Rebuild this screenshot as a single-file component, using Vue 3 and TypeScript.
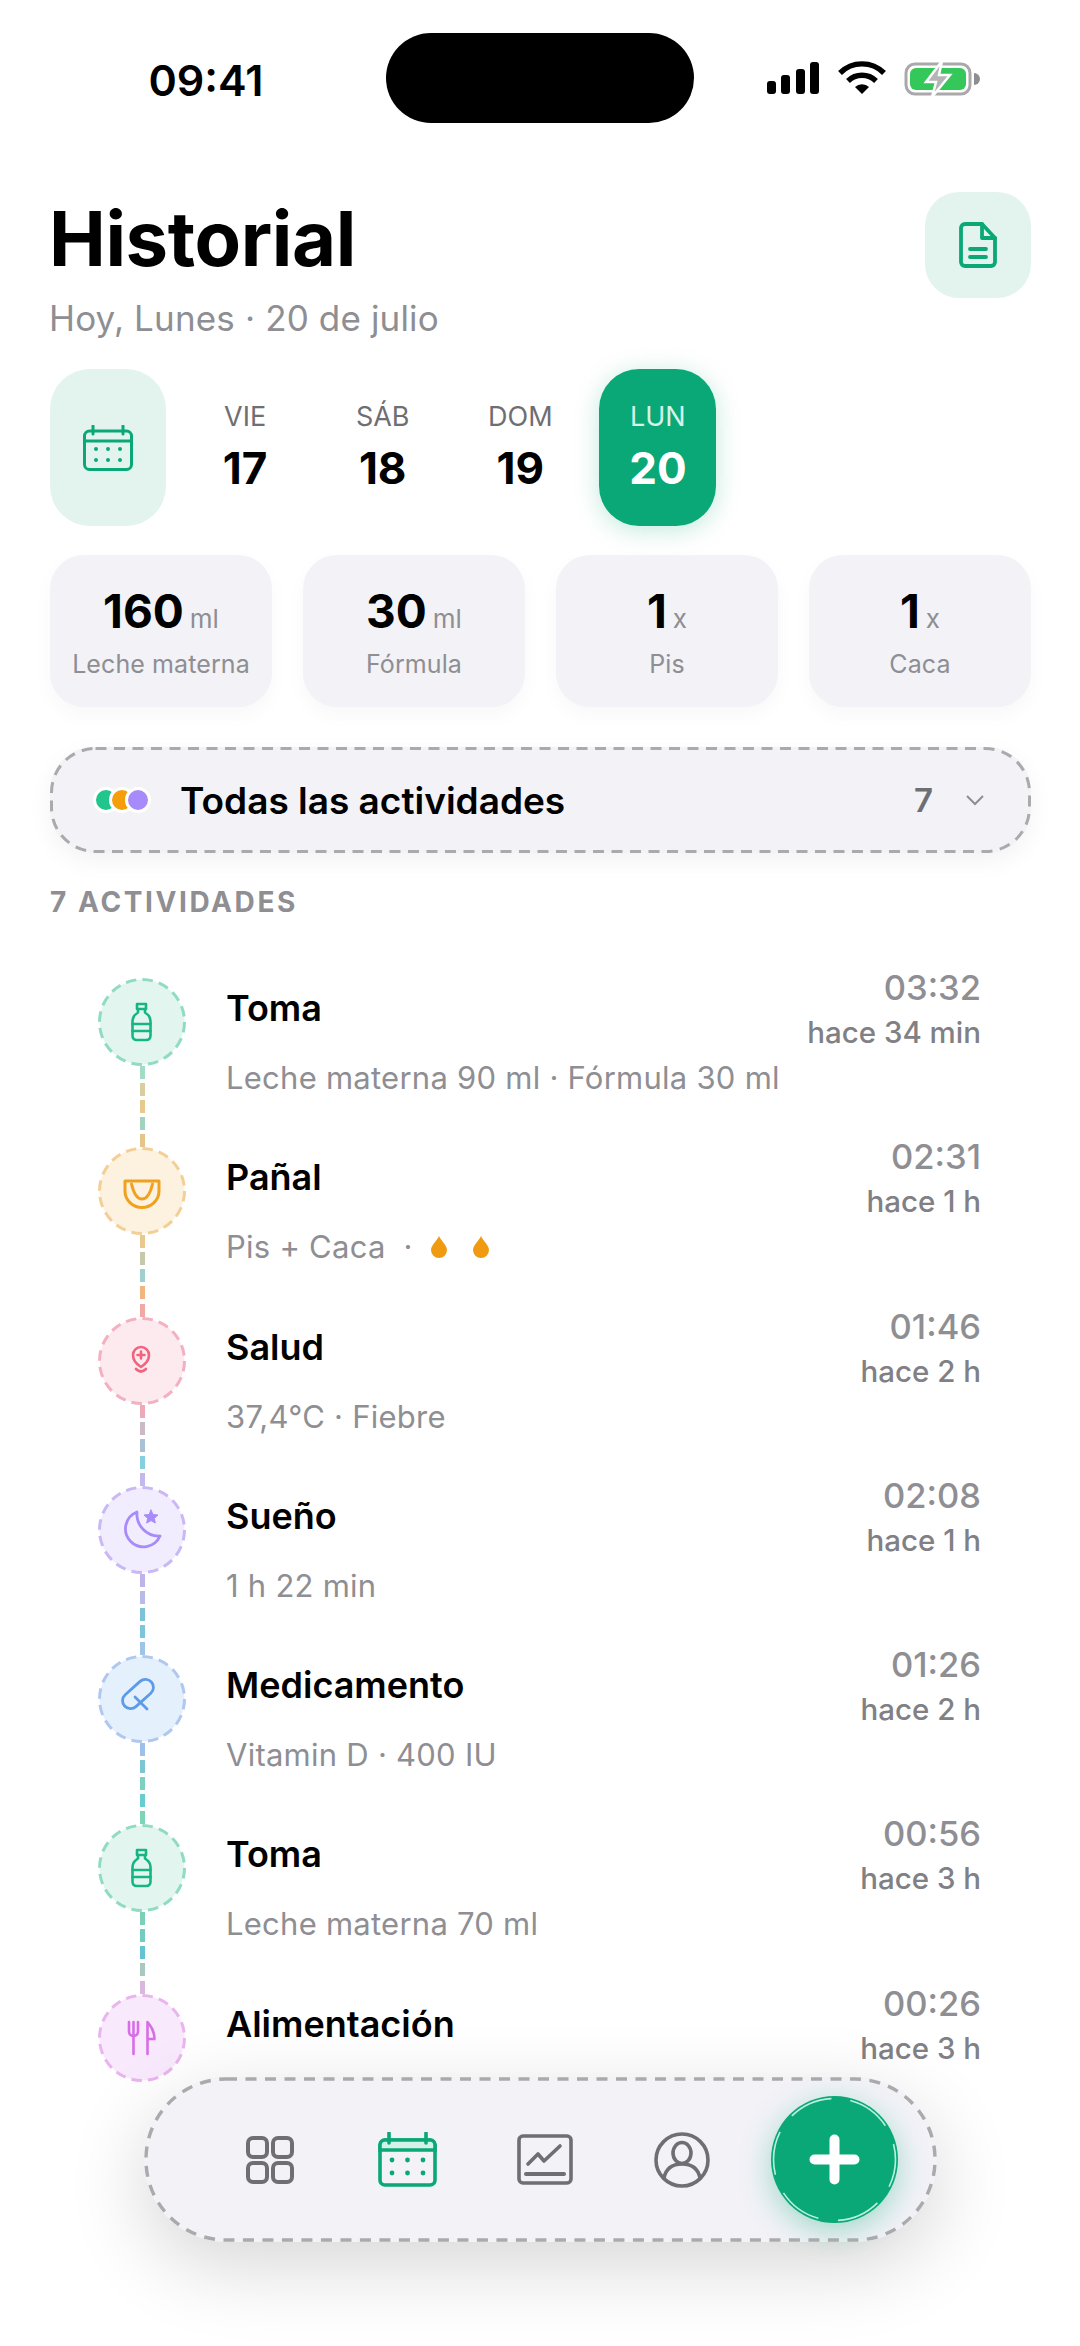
<script setup lang="ts">
type Row = {
  id: number
  kind: string
  title: string
  sub: string
  time: string
  ago: string
  fill: string
  ring: string
  ink: string
  drops?: boolean
  dashes: string[]
}

const days = [
  { label: 'VIE', num: 17, active: false },
  { label: 'SÁB', num: 18, active: false },
  { label: 'DOM', num: 19, active: false },
  { label: 'LUN', num: 20, active: true }
]

const stats = [
  { value: '160', unit: 'ml', label: 'Leche materna' },
  { value: '30', unit: 'ml', label: 'Fórmula' },
  { value: '1', unit: 'x', label: 'Pis' },
  { value: '1', unit: 'x', label: 'Caca' }
]

const rows: Row[] = [
  { id: 1, kind: 'bottle', title: 'Toma', sub: 'Leche materna 90 ml · Fórmula 30 ml', time: '03:32', ago: 'hace 34 min',
    fill: '#e2f6ef', ring: '#8fdcc0', ink: '#17b584',
    dashes: ['#a3dcc4', '#d9cf9e', '#e6c98e', '#a0d4c0', '#e5c68a'] },
  { id: 2, kind: 'diaper', title: 'Pañal', sub: 'Pis + Caca  ·', time: '02:31', ago: 'hace 1 h',
    fill: '#fdf1e0', ring: '#f3cf95', ink: '#f0a21e', drops: true,
    dashes: ['#e8c88e', '#c7c9a8', '#9fd0cf', '#f0b67e', '#f2a9a6'] },
  { id: 3, kind: 'health', title: 'Salud', sub: '37,4°C · Fiebre', time: '01:46', ago: 'hace 2 h',
    fill: '#fdeaee', ring: '#f3b0c0', ink: '#f0647f',
    dashes: ['#ecaab8', '#cdb9c6', '#a8c2d4', '#86cfe0', '#c5b8ec'] },
  { id: 4, kind: 'sleep', title: 'Sueño', sub: '1 h 22 min', time: '02:08', ago: 'hace 1 h',
    fill: '#f1ecfe', ring: '#c9b8f5', ink: '#a78bfa',
    dashes: ['#c0b3ec', '#b8bbe8', '#7cc3d8', '#7cc6dc', '#a0c4e8'] },
  { id: 5, kind: 'pill', title: 'Medicamento', sub: 'Vitamin D · 400 IU', time: '01:26', ago: 'hace 2 h',
    fill: '#e5f0fd', ring: '#b0c8f0', ink: '#5b9be8',
    dashes: ['#9cc0ea', '#7cc6d4', '#7ed0c0', '#68cdd0', '#7dd4b8'] },
  { id: 6, kind: 'bottle', title: 'Toma', sub: 'Leche materna 70 ml', time: '00:56', ago: 'hace 3 h',
    fill: '#e2f6ef', ring: '#8fdcc0', ink: '#17b584',
    dashes: ['#7dd0b8', '#74ccc0', '#64c4d4', '#a8c8c0', '#d8b8dc'] },
  { id: 7, kind: 'food', title: 'Alimentación', sub: '', time: '00:26', ago: 'hace 3 h',
    fill: '#f9e9fc', ring: '#e9b5ef', ink: '#d86de8',
    dashes: [] }
]
</script>

<template>
  <div class="screen">
    <div class="status">
      <div class="clock">09:41</div>
      <div class="island"></div>
      <div class="status-icons">
        <svg width="54" height="34" viewBox="0 0 54 34">
          <rect x="1" y="20" width="9" height="13" rx="3" fill="#000" />
          <rect x="15" y="14" width="9" height="19" rx="3" fill="#000" />
          <rect x="30" y="8" width="9" height="25" rx="3" fill="#000" />
          <rect x="44" y="1" width="9" height="32" rx="3" fill="#000" />
        </svg>
        <svg width="48" height="34" viewBox="0 0 48 34" fill="none" stroke="#000" stroke-width="5.4">
          <path d="M2 12 A31 31 0 0 1 46 12" />
          <path d="M10 20 A20 20 0 0 1 38 20" />
          <path d="M17 26 L24 33 L31 26 A10 10 0 0 0 17 26 Z" fill="#000" stroke="none" />
        </svg>
        <svg width="76" height="36" viewBox="0 0 76 36" fill="none">
          <rect x="2" y="3" width="64" height="30" rx="9" stroke="#a9a9ab" stroke-width="3" />
          <path d="M70 12 A6 6 0 0 1 70 24 Z" fill="#8e8e90" />
          <rect x="6" y="7" width="56" height="22" rx="6" fill="#34c759" />
          <path d="M38 0 L22 21 H32 L28 36 L46 14 H35 Z" fill="#b4b4b6" stroke="#fff" stroke-width="2.5" />
        </svg>
      </div>
    </div>

    <div class="page">
      <header class="head">
        <div>
          <h1>Historial</h1>
          <p class="date">Hoy, Lunes · 20 de julio</p>
        </div>
        <button class="doc-btn">
          <svg width="38" height="46" viewBox="0 0 38 46" fill="none" stroke="#0aa876" stroke-width="3.8" stroke-linejoin="round" stroke-linecap="round">
            <path d="M6 2 H23 L36 16 V40 A4 4 0 0 1 32 44 H6 A4 4 0 0 1 2 40 V6 A4 4 0 0 1 6 2 Z" />
            <path d="M23 2 V16 H36" />
            <path d="M11 27 H27 M11 35 H27" />
          </svg>
        </button>
      </header>

      <div class="days">
        <div class="cal-tile">
          <svg width="50" height="46" viewBox="0 0 50 46" fill="none" stroke="#0aa876" stroke-width="3">
            <rect x="1.5" y="6" width="47" height="38.5" rx="5" />
            <path d="M1.5 16 H48.5" />
            <path d="M10 1 V9 M40 1 V9" stroke-linecap="round" />
            <g fill="#0aa876" stroke="none">
              <circle cx="13" cy="24" r="2" /><circle cx="25" cy="24" r="2" /><circle cx="37" cy="24" r="2" />
              <circle cx="13" cy="35" r="2" /><circle cx="25" cy="35" r="2" /><circle cx="37" cy="35" r="2" />
            </g>
          </svg>
        </div>
        <div v-for="d in days" :key="d.num" class="day" :class="{ active: d.active }">
          <span class="day-label">{{ d.label }}</span>
          <span class="day-num">{{ d.num }}</span>
        </div>
      </div>

      <div class="stats">
        <div v-for="s in stats" :key="s.label" class="stat">
          <div class="stat-value">{{ s.value }}<small>{{ s.unit }}</small></div>
          <div class="stat-label">{{ s.label }}</div>
        </div>
      </div>

      <div class="filter">
        <svg class="outline" width="981" height="106" viewBox="0 0 981 106" fill="none">
          <rect x="1.5" y="1.5" width="978" height="103" rx="44" stroke="#aaaaac" stroke-width="3" stroke-dasharray="11 7.5" />
        </svg>
        <div class="dots"><i class="g"></i><i class="o"></i><i class="p"></i></div>
        <span class="filter-text">Todas las actividades</span>
        <span class="filter-count">7</span>
        <svg width="20" height="12" viewBox="0 0 20 12" fill="none" stroke="#8e8e93" stroke-width="2">
          <path d="M2 2 L10 10 L18 2" />
        </svg>
      </div>

      <div class="section">7 ACTIVIDADES</div>

      <div class="timeline">
        <div v-for="r in rows" :key="r.id" class="row">
          <div class="rail">
            <svg class="node" width="88" height="88" viewBox="-44 -44 88 88" fill="none">
              <circle r="42.5" :fill="r.fill" :stroke="r.ring" stroke-width="3" stroke-dasharray="10.5 6.2" />
              <g :stroke="r.ink" stroke-width="2.6" stroke-linecap="round" stroke-linejoin="round">
                <template v-if="r.kind === 'bottle'">
                  <path d="M-5 -18 H4 V-13 H-5 Z" />
                  <path d="M-4 -13 V-9.5 Q-9.5 -6 -9.5 -1 V13.5 Q-9.5 18 -5 18 H4 Q8.5 18 8.5 13.5 V-1 Q8.5 -6 3 -9.5 V-13" />
                  <path d="M-9.5 2 H8.5 M-9.5 9 H8.5" />
                </template>
                <template v-else-if="r.kind === 'diaper'">
                  <path d="M-17 -10 H17 V0 A17 16.5 0 0 1 -17 0 Z" stroke-width="3" />
                  <path d="M-10.5 -7 Q-7 8 0 8 Q7 8 10.5 -7" stroke-width="3" />
                </template>
                <template v-else-if="r.kind === 'health'">
                  <path d="M-1 6 Q-9 1 -9 -6 A8 8 0 0 1 7 -6 Q7 1 -1 6 Z" />
                  <path d="M-1 -9.5 V-2.5 M-4.5 -6 H2.5" />
                  <path d="M-6 8 Q-1 13 4 8" />
                </template>
                <template v-else-if="r.kind === 'sleep'">
                  <path d="M-5 -18 A18 18 0 1 0 18 6 A22 22 0 0 1 -5 -18 Z" stroke-width="2.8" />
                  <path d="M9 -20 L11 -15.5 L16 -15 L12.3 -11.7 L13.3 -7 L9 -9.4 L4.7 -7 L5.7 -11.7 L2 -15 L7 -15.5 Z" :fill="r.ink" stroke-width="1" />
                </template>
                <template v-else-if="r.kind === 'pill'">
                  <rect x="-22" y="-13" width="36" height="16" rx="8" transform="rotate(-42 -4 -5)" stroke-width="2.8" />
                  <path d="M-7 -2 L5 10" stroke-width="2.8" />
                </template>
                <template v-else-if="r.kind === 'food'">
                  <path d="M-13 -16 V-7 Q-13 -2 -8.5 -2 Q-4 -2 -4 -7 V-16 M-8.5 -16 V16" />
                  <path d="M5.5 16 V-16 Q12.5 -8 12.5 1 H5.5" />
                </template>
              </g>
            </svg>
            <div v-if="r.dashes.length" class="link">
              <span v-for="(c, i) in r.dashes" :key="i" class="dash" :style="{ background: c }"></span>
            </div>
          </div>
          <div class="body">
            <div class="title">{{ r.title }}</div>
            <div v-if="r.sub" class="sub">
              <span>{{ r.sub }}</span>
              <template v-if="r.drops">
                <svg v-for="n in 2" :key="n" class="drop" width="16" height="22" viewBox="0 0 16 22">
                  <path d="M8 0 C10 5 16 9 16 14 A8 8 0 0 1 0 14 C0 9 6 5 8 0 Z" fill="#f09a12" />
                </svg>
              </template>
            </div>
          </div>
          <div class="side">
            <div class="time">{{ r.time }}</div>
            <div class="ago">{{ r.ago }}</div>
          </div>
        </div>
      </div>
    </div>

    <nav class="tabbar">
      <svg class="outline" width="793" height="165" viewBox="0 0 793 165" fill="none">
        <rect x="2" y="2" width="789" height="161" rx="80" stroke="#aaaaac" stroke-width="3.4" stroke-dasharray="11 8.5" />
      </svg>
      <div class="tab">
        <svg width="48" height="48" viewBox="0 0 48 48" fill="none" stroke="#6e6e73" stroke-width="4">
          <rect x="2" y="2" width="19" height="19" rx="5" />
          <rect x="27" y="2" width="19" height="19" rx="5" />
          <rect x="2" y="27" width="19" height="19" rx="5" />
          <rect x="27" y="27" width="19" height="19" rx="5" />
        </svg>
      </div>
      <div class="tab">
        <svg width="59" height="55" viewBox="0 0 59 55" fill="none" stroke="#0aa876" stroke-width="3.6">
          <rect x="2" y="8" width="55" height="45" rx="5" />
          <path d="M2 17 H57" />
          <path d="M2 13 A5 5 0 0 1 7 8 H52 A5 5 0 0 1 57 13 V18 H2 Z" fill="#d6f2e8" />
          <path d="M11 1 V11 M48 1 V11" stroke-linecap="round" />
          <g fill="#0aa876" stroke="none">
            <circle cx="14" cy="28" r="2.4" /><circle cx="29.5" cy="28" r="2.4" /><circle cx="45" cy="28" r="2.4" />
            <circle cx="14" cy="41" r="2.4" /><circle cx="29.5" cy="41" r="2.4" /><circle cx="45" cy="41" r="2.4" />
          </g>
        </svg>
      </div>
      <div class="tab">
        <svg width="56" height="51" viewBox="0 0 56 51" fill="none" stroke="#6e6e73" stroke-width="3.6" stroke-linecap="round" stroke-linejoin="round">
          <rect x="2" y="2" width="52" height="47" rx="4" />
          <path d="M11 30 L21 20 L27 27 L43 12" />
          <path d="M9 40 H47" stroke-width="4" />
        </svg>
      </div>
      <div class="tab">
        <svg width="56" height="56" viewBox="0 0 56 56" fill="none" stroke="#6e6e73" stroke-width="3.6">
          <circle cx="28" cy="28" r="26" />
          <ellipse cx="28" cy="21" rx="9" ry="10.5" />
          <path d="M10 46 C12 36 19 32 28 32 C37 32 44 36 46 46" />
        </svg>
      </div>
      <button class="fab">
        <svg width="127" height="127" viewBox="-63.5 -63.5 127 127" fill="none">
          <circle r="61" stroke="#b9f0dc" stroke-width="1.6" stroke-dasharray="44 19.9" stroke-dashoffset="-16" transform="rotate(-90)" />
          <path d="M-20 0 H20 M0 -20 V20" stroke="#fff" stroke-width="10" stroke-linecap="round" />
        </svg>
      </button>
    </nav>
  </div>
</template>

<style>
html,
body {
  margin: 0;
  background: #fff;
}
</style>

<style scoped>
.screen {
  position: relative;
  width: 1080px;
  height: 2346px;
  overflow: hidden;
  background: #fff;
  font-family: Inter, "Liberation Sans", sans-serif;
  color: #000;
}

.status {
  display: flex;
  height: 159px;
  padding-top: 33px;
  box-sizing: content-box;
}

.clock {
  width: 386px;
  height: 90px;
  line-height: 94px;
  text-align: center;
  font-size: 43px;
  font-weight: 600;
  padding-left: 26px;
  box-sizing: border-box;
}

.island {
  width: 308px;
  height: 90px;
  border-radius: 45px;
  background: #000;
}

.status-icons {
  display: flex;
  align-items: flex-start;
  gap: 18px;
  padding: 28px 0 0 72px;
}

.page {
  padding: 0 49px 0 50px;
}

.head {
  display: flex;
  justify-content: space-between;
  height: 146px;
}

h1 {
  margin: 0;
  margin-left: -1px;
  font-size: 76px;
  line-height: 92px;
  font-weight: 700;
  letter-spacing: -0.4px;
}

.date {
  margin: 14px 0 0 -1px;
  font-size: 35px;
  line-height: 40px;
  letter-spacing: 0.15px;
  color: #8e8e93;
}

.doc-btn {
  width: 106px;
  height: 106px;
  border: 0;
  padding: 0;
  border-radius: 34px;
  background: #e3f4ef;
  display: flex;
  align-items: center;
  justify-content: center;
}

.days {
  display: flex;
  gap: 20.6px;
  margin-top: 31px;
}

.cal-tile {
  width: 116px;
  height: 157px;
  border-radius: 40px;
  background: #e3f4ef;
  display: flex;
  align-items: center;
  justify-content: center;
}

.day {
  width: 117px;
  height: 157px;
  padding-bottom: 2px;
  box-sizing: border-box;
  border-radius: 40px;
  display: flex;
  flex-direction: column;
  align-items: center;
  justify-content: center;
}

.day-label {
  font-size: 27px;
  line-height: 36px;
  color: #6e6e73;
}

.day-num {
  font-size: 44px;
  line-height: 52px;
  margin-top: 7px;
  font-weight: 700;
}

.day.active {
  background: #0aa876;
  box-shadow: 0 4px 24px rgba(10, 168, 118, 0.25);
}

.day.active .day-label {
  color: #d5f3e8;
}

.day.active .day-num {
  color: #fff;
}

.stats {
  display: flex;
  gap: 31px;
  margin-top: 29px;
}

.stat {
  width: 222px;
  height: 152px;
  border-radius: 34px;
  background: #f2f2f7;
  box-shadow: 0 8px 20px rgba(0, 0, 0, 0.03);
  display: flex;
  flex-direction: column;
  align-items: center;
  justify-content: center;
}

.stat-value {
  font-size: 46px;
  line-height: 56px;
  font-weight: 700;
}

.stat-value small {
  font-size: 26px;
  font-weight: 400;
  color: #8e8e93;
  margin-left: 6px;
}

.stat-label {
  margin-top: 1px;
  font-size: 25px;
  line-height: 32px;
  letter-spacing: 0.1px;
  color: #8e8e93;
}

.filter {
  position: relative;
  display: flex;
  align-items: center;
  height: 106px;
  margin-top: 40px;
  border-radius: 44px;
  background: #f2f2f7;
  box-shadow: 0 8px 24px rgba(0, 0, 0, 0.05);
  padding: 0 46px 0 43px;
}

.outline {
  position: absolute;
  left: 0;
  top: 0;
}

.dots {
  display: flex;
  width: 87px;
}

.dots i {
  width: 20px;
  height: 20px;
  margin-right: -10px;
  border-radius: 50%;
  border: 3px solid #fff;
}

.dots .g {
  background: #22c58c;
}

.dots .o {
  background: #f59e0b;
}

.dots .p {
  background: #a78bfa;
}

.filter-text {
  flex: 1;
  font-size: 37px;
  font-weight: 600;
}

.filter-count {
  font-size: 33px;
  font-weight: 600;
  color: #6e6e73;
  margin-right: 32px;
}

.section {
  margin-top: 31px;
  font-size: 28px;
  line-height: 36px;
  font-weight: 700;
  letter-spacing: 2.6px;
  color: #8e8e93;
}

.timeline {
  margin-top: 58px;
}

.row {
  display: flex;
  height: 169.25px;
  padding: 0 50px 0 48px;
}

.rail {
  width: 88px;
  margin-right: 40px;
  flex-shrink: 0;
  display: flex;
  flex-direction: column;
  align-items: center;
}

.node {
  display: block;
  flex-shrink: 0;
}

.link {
  height: 81.25px;
  display: flex;
  flex-direction: column;
  justify-content: space-between;
}

.dash {
  display: block;
  width: 5px;
  height: 13px;
}

.body {
  flex: 1;
  min-width: 0;
  padding-top: 8px;
}

.title {
  font-size: 36px;
  line-height: 44px;
  font-weight: 600;
}

.sub {
  margin-top: 28px;
  font-size: 31px;
  line-height: 40px;
  letter-spacing: 0.25px;
  color: #8e8e93;
  white-space: pre;
  display: flex;
  align-items: center;
}

.drop {
  margin-left: 26px;
}

.drop:first-of-type {
  margin-left: 18px;
}

.side {
  position: relative;
  margin-top: -12px;
  text-align: right;
  margin-left: -400px;
}

.time {
  font-size: 34.5px;
  line-height: 44px;
  font-weight: 500;
  color: #8e8e93;
}

.ago {
  margin-top: 4px;
  font-size: 29.5px;
  line-height: 36px;
  font-weight: 500;
  color: #808085;
}

.tabbar {
  position: absolute;
  left: 144px;
  top: 2077px;
  width: 793px;
  height: 165px;
  border-radius: 82px;
  background: #f2f2f7;
  box-shadow: 0 24px 80px rgba(0, 0, 0, 0.16);
  display: flex;
  align-items: center;
  padding-left: 57px;
  box-sizing: border-box;
}

.tab {
  width: 137.5px;
  display: flex;
  justify-content: center;
}

.fab {
  width: 127px;
  height: 127px;
  margin-left: 20px;
  padding: 0;
  border: 0;
  border-radius: 50%;
  background: #0aa876;
  box-shadow: 0 8px 30px rgba(10, 168, 118, 0.35);
  display: flex;
}
</style>
